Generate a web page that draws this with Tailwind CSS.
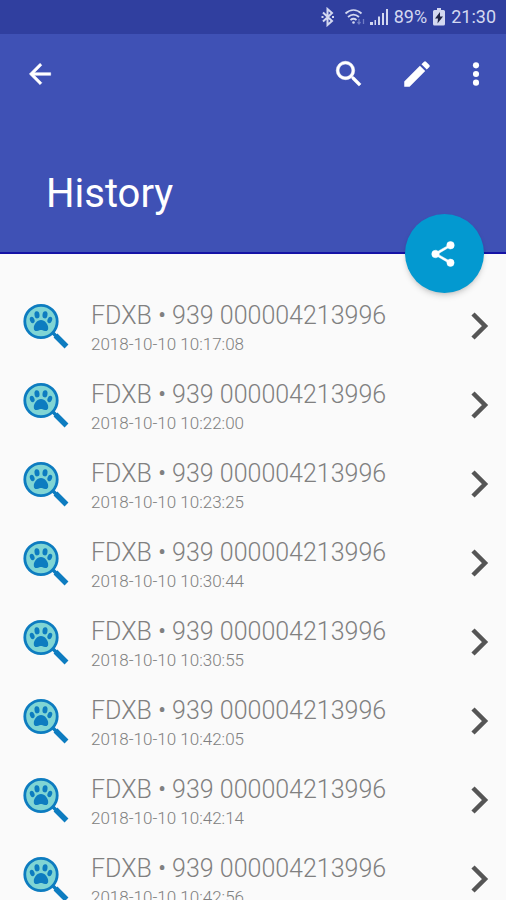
<!DOCTYPE html>
<html lang="en">
<head>
<meta charset="utf-8">
<meta name="viewport" content="width=device-width, initial-scale=1">
<title>History</title>
<script src="https://cdn.jsdelivr.net/npm/@tailwindcss/browser@4"></script>
</head>
<body class="flex h-screen flex-col overflow-hidden bg-[#fafafa] font-['Roboto',sans-serif]">
<svg class="hidden">
  <symbol id="paw" viewBox="0 0 46 46">
    <path d="M32.500 32.500l11 11" stroke="#0d7cc0" stroke-width="5.500"/>
    <path d="M29 29l5 5" stroke="#0d7cc0" stroke-width="3.500"/>
    <circle cx="18" cy="18.500" r="16.200" fill="#80d5d4" stroke="#0d7cc0" stroke-width="2.800"/>
    <g fill="#0d7cc0">
      <ellipse cx="14" cy="11.800" rx="2.500" ry="3.600" transform="rotate(-8 14 11.800)"/>
      <ellipse cx="22" cy="11.800" rx="2.500" ry="3.600" transform="rotate(8 22 11.800)"/>
      <ellipse cx="9.200" cy="17" rx="2.200" ry="3.200" transform="rotate(-24 9.200 17)"/>
      <ellipse cx="26.800" cy="17" rx="2.200" ry="3.200" transform="rotate(24 26.800 17)"/>
      <path d="M18 17c4 0 7.200 4.500 7.200 7.900 0 2.400-1.300 3.400-3.200 3.100-1.500-.2-2.500-.9-4-.9s-2.500.7-4 .9c-1.900.3-3.200-.7-3.200-3.100C10.800 21.500 14 17 18 17z"/>
    </g>
  </symbol>
  <symbol id="chevron" viewBox="0 0 20 28">
    <path d="M3 2l12 12L3 26" fill="none" stroke="#555" stroke-width="4.500"/>
  </symbol>
</svg>

<header class="relative shrink-0 border-b-2 border-[#1512a5] bg-[#3f51b5]">
  <div class="flex h-[34px] items-center justify-end bg-[#303f9f] pr-[10px] text-lg text-[#d3d8f0]">
    <svg class="mr-2 h-5 w-4" viewBox="0 0 16 20" fill="none" stroke="currentColor" stroke-width="2"><path d="M3 5.500l9 8.500-4.500 4V2l4.500 4-9 8.500"/><path d="M1.500 10h2M12 10h2" stroke-width="2"/></svg>
    <svg class="mr-1 h-5 w-[22px]" viewBox="0 0 21 20" fill="none" stroke="currentColor" stroke-width="1.800"><path d="M1 6.500c5-4.500 11-4.500 16 0M3.500 10c3.500-3 7.500-3 11 0M6 13c2-1.600 4-1.600 6 0"/><circle cx="9" cy="15.500" r="1.300" fill="currentColor" stroke="none"/><path d="M14.500 12v5m-1.500-2 1.500 2 1.500-2M19 17v-5" stroke="#6f7cc4" stroke-width="1.300"/></svg>
    <svg class="mr-[6px] h-5 w-[18px]" viewBox="0 0 18 20" fill="currentColor"><path d="M0 15h3v3H0zM4.500 13H6v5H4.500zM8 9.500h2V18H8zM12 6h2v12h-2zM16 2h2v16h-2z"/></svg>
    <span>89%</span>
    <svg class="mx-[6px] h-5 w-3" viewBox="0 0 12 20"><path fill="currentColor" d="M4 1h4v2h2.500A1.500 1.500 0 0 1 12 4.500V17a1.500 1.500 0 0 1-1.500 1.500h-9A1.500 1.500 0 0 1 0 17V4.500A1.500 1.500 0 0 1 1.500 3H4z"/><path fill="#202545" d="M7 5l-5 6.500h3L4.500 16.500l5.500-7H7z"/></svg>
    <span>21:30</span>
  </div>
  <nav class="flex h-20 items-center pl-6 pr-[14px] text-white">
    <button type="button" aria-label="Back"><svg class="size-8" viewBox="0 0 24 24" fill="currentColor" stroke="currentColor" stroke-width=".4"><path d="M20 11H7.830l5.590-5.590L12 4l-8 8 8 8 1.410-1.410L7.830 13H20v-2z"/></svg></button>
    <button type="button" aria-label="Search" class="ml-auto"><svg class="size-[34px]" viewBox="0 0 24 24" fill="currentColor" stroke="currentColor" stroke-width=".4"><path d="M15.500 14h-.79l-.28-.27A6.471 6.471 0 0 0 16 9.500 6.500 6.500 0 1 0 9.500 16c1.610 0 3.090-.59 4.230-1.570l.27.28v.79l5 4.990L20.490 19l-4.990-5zm-6 0C7.010 14 5 11.990 5 9.500S7.010 5 9.500 5 14 7.010 14 9.500 11.990 14 9.500 14z"/></svg></button>
    <button type="button" aria-label="Edit" class="ml-[34px]"><svg class="size-[34px]" viewBox="0 0 24 24" fill="currentColor"><path d="M3 17.250V21h3.750L17.810 9.940l-3.750-3.750L3 17.250zM20.710 7.040a1 1 0 0 0 0-1.410l-2.340-2.340a1 1 0 0 0-1.410 0l-1.830 1.830 3.750 3.750 1.830-1.830z"/></svg></button>
    <button type="button" aria-label="More options" class="ml-[26px]"><svg class="size-8" viewBox="0 0 24 24" fill="currentColor"><circle cx="12" cy="5.500" r="2.300"/><circle cx="12" cy="12" r="2.300"/><circle cx="12" cy="18.500" r="2.300"/></svg></button>
  </nav>
  <h1 class="px-[46px] pb-7 pt-[50px] text-[40px] leading-[60px] text-white">History</h1>
  <button type="button" aria-label="Share" class="absolute -bottom-[41px] right-[22px] flex size-[79px] items-center justify-center rounded-full bg-[#0399d0] pr-1 text-white shadow-md shadow-black/15">
    <svg class="size-[30px]" viewBox="0 0 24 24" fill="currentColor" stroke="currentColor" stroke-width=".4"><path d="M18 16.080c-.76 0-1.440.3-1.960.77L8.910 12.700c.05-.23.090-.46.090-.7s-.04-.47-.09-.7l7.050-4.110c.54.5 1.250.81 2.040.81a3 3 0 1 0-3-3c0 .24.040.47.090.7L8.040 9.810A2.990 2.990 0 0 0 6 9a3 3 0 1 0 0 6c.79 0 1.500-.31 2.040-.81l7.120 4.160c-.05.21-.08.43-.08.65A2.920 2.920 0 1 0 18 16.080z"/></svg>
  </button>
</header>

<main class="pt-8">
  <ul id="history"></ul>
</main>

<script>
const times = ["10:17:08", "10:22:00", "10:23:25", "10:30:44", "10:30:55", "10:42:05", "10:42:14", "10:42:56"];
document.getElementById("history").innerHTML = times.map(time => `
  <li><a href="#" class="flex h-[79px] items-center pl-[23px] pr-4">
    <svg class="mr-[22px] size-[46px] shrink-0" aria-hidden="true"><use href="#paw"/></svg>
    <div class="grow pt-1">
      <div class="text-[25px] font-light leading-8 text-[#808080]">FDXB • 939 000004213996</div>
      <div class="text-[17px] font-light leading-6 text-[#808080]">2018-10-10 ${time}</div>
    </div>
    <svg class="h-7 w-5 shrink-0" aria-hidden="true"><use href="#chevron"/></svg>
  </a></li>`).join("");
</script>
</body>
</html>
